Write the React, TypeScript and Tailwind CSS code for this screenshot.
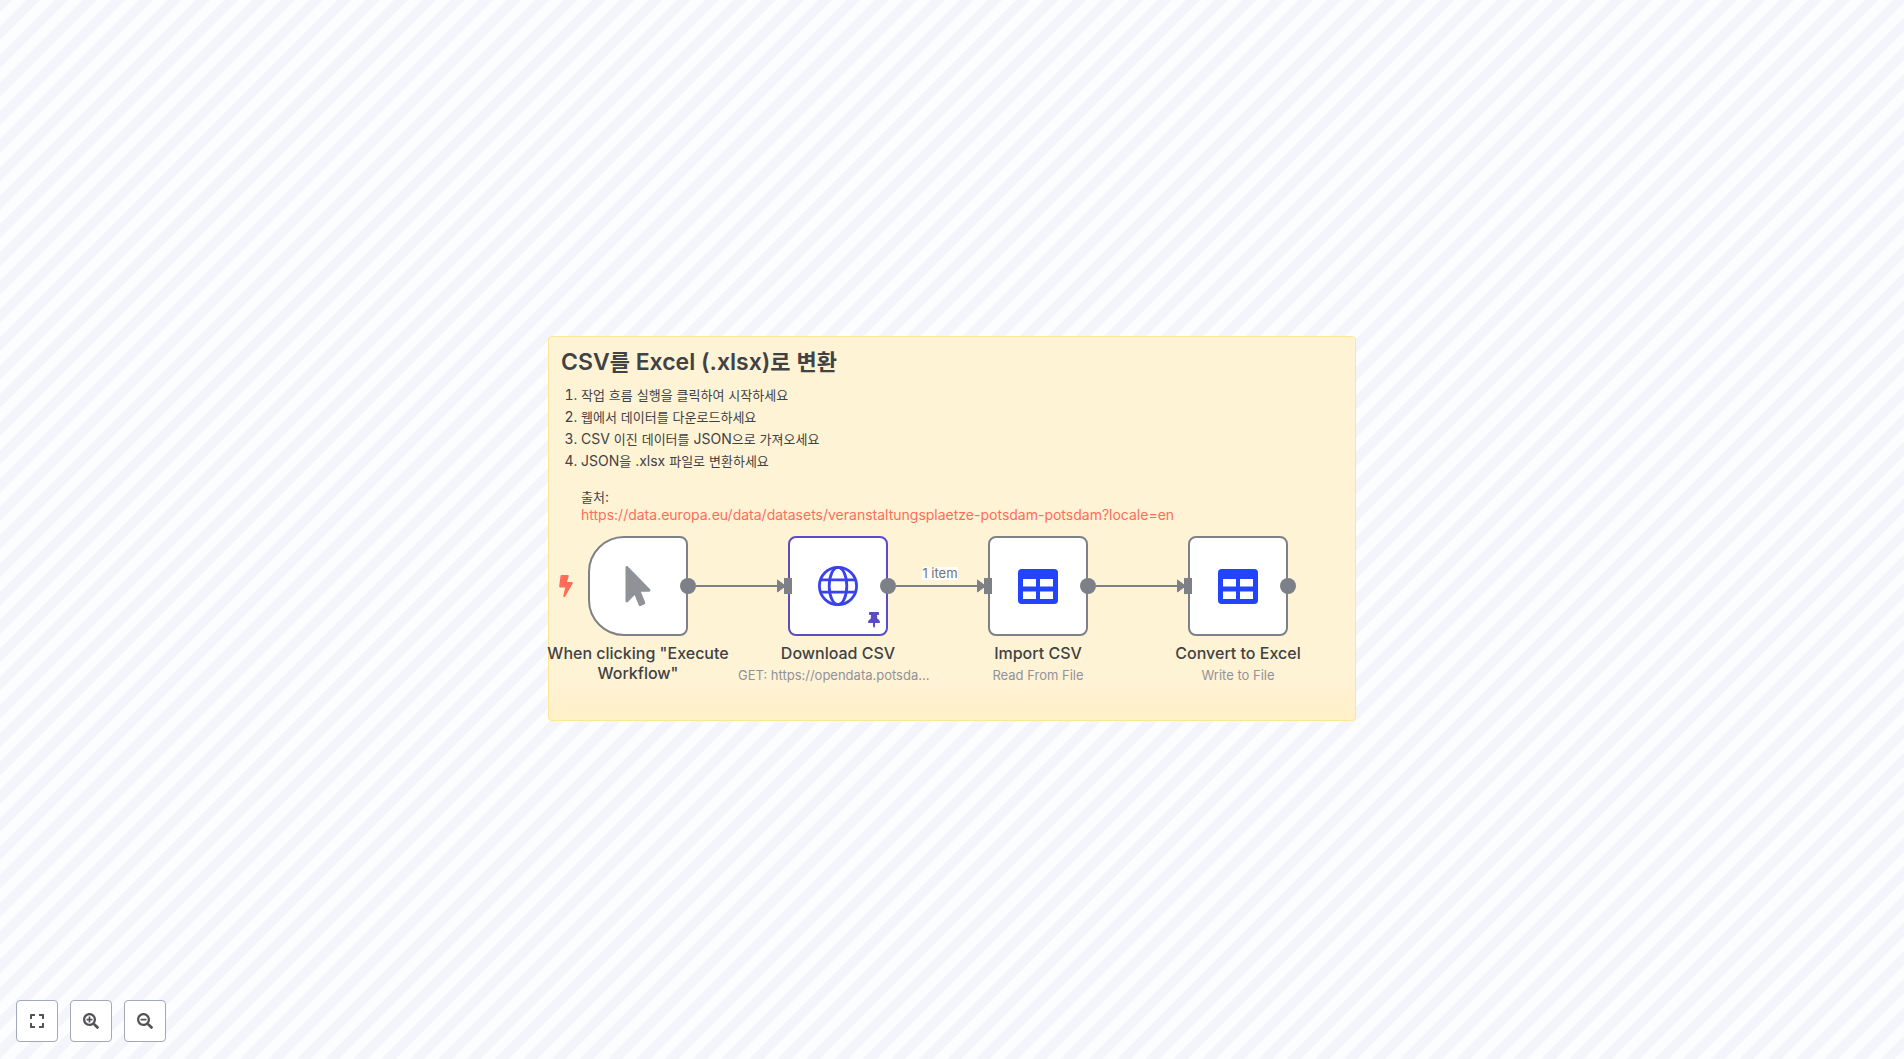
import React from "react";
import { FaBolt, FaExpand, FaMousePointer, FaSearchMinus, FaSearchPlus, FaThumbtack } from "react-icons/fa";

const steps = [
  "작업 흐름 실행을 클릭하여 시작하세요",
  "웹에서 데이터를 다운로드하세요",
  "CSV 이진 데이터를 JSON으로 가져오세요",
];

const sourceUrl = "https://data.europa.eu/data/datasets/veranstaltungsplaetze-potsdam-potsdam?locale=en";

/* Sets Hangul runs one step smaller than the Latin text beside them. */
function Mixed({ text, hangul }: { text: string; hangul: string }) {
  return (
    <>
      {text.split(/([가-힣]+)/).map((part, i) =>
        i % 2 ? (
          <span key={i} className={hangul}>
            {part}
          </span>
        ) : (
          part
        ),
      )}
    </>
  );
}

function GlobeIcon() {
  return (
    <svg viewBox="0 0 40 40" className="size-10" fill="none" stroke="#3a42e9" strokeWidth="2.8" aria-hidden="true">
      <circle cx="20" cy="20" r="18.6" />
      <ellipse cx="20" cy="20" rx="8.8" ry="18.6" />
      <path d="M2.5 13.8h35M2.5 26.2h35" />
    </svg>
  );
}

function TableIcon() {
  return (
    <svg viewBox="0 0 40 35" className="h-[35px] w-10" aria-hidden="true">
      <path
        fill="#2244ff"
        fillRule="evenodd"
        d="M3.75 0h32.5A3.75 3.75 0 0 1 40 3.75v27.5A3.75 3.75 0 0 1 36.250 35H3.75A3.75 3.75 0 0 1 0 31.250V3.750A3.75 3.75 0 0 1 3.75 0ZM5 10v7.500h13V10ZM22 10v7.500h13V10ZM5 22.500V30h13v-7.500ZM22 22.500V30h13v-7.500Z"
      />
    </svg>
  );
}

type NodeProps = {
  place: string;
  title: string;
  subtitle?: string;
  longSubtitle?: boolean;
  trigger?: boolean;
  pinned?: boolean;
  children: React.ReactNode;
};

function Node({ place, title, subtitle, longSubtitle, trigger, pinned, children }: NodeProps) {
  return (
    <div className={`absolute top-[199px] flex w-[200px] flex-col items-center ${place}`}>
      <div
        className={`relative flex size-[100px] items-center justify-center border-2 bg-white ${
          trigger ? "rounded-l-[36px] rounded-r-lg" : "rounded-lg"
        } ${pinned ? "border-[#5b4bc4]" : "border-[#7d8187]"}`}
      >
        {children}
        {trigger ? (
          <FaBolt className="absolute right-full mr-[11px] h-[22px] w-[26px] text-[#ff6d5a]" />
        ) : (
          <span className="absolute -left-1.5 h-4 w-2 bg-[#7d8187]" />
        )}
        <span className="absolute -right-2.5 size-4 rounded-full bg-[#7d8187]" />
        {pinned && <FaThumbtack className="absolute right-1.5 bottom-1.5 h-4 w-3 text-[#5b4bc4]" />}
      </div>
      <div className="mt-[7px] text-center text-base leading-5 font-medium text-[#414244]">{title}</div>
      {subtitle && (
        <div className={`mt-0.5 text-[13px] leading-5 whitespace-nowrap text-[#909298] ${longSubtitle ? "self-start" : ""}`}>
          {subtitle}
        </div>
      )}
    </div>
  );
}

function Edge({ place, label }: { place: string; label?: string }) {
  return (
    <div className={`absolute top-[241px] flex w-[94px] justify-center ${place}`}>
      <svg viewBox="0 0 94 16" className="h-4 w-full" aria-hidden="true">
        <path d="M0 8h86" stroke="#7d8187" strokeWidth="2" />
        <path d="M81.500 2l8 6-8 6z" fill="#7d8187" stroke="#7d8187" strokeLinejoin="round" />
      </svg>
      {label && (
        <span className="absolute bottom-full mr-1.5 -mb-0.5 bg-white/80 text-[13px] leading-[13px] whitespace-nowrap text-[#71747a]">
          {label}
        </span>
      )}
    </div>
  );
}

function ControlButton({ label, children }: { label: string; children: React.ReactNode }) {
  return (
    <button
      type="button"
      aria-label={label}
      className="flex size-[42px] items-center justify-center rounded border border-[#a3a8b8] bg-white text-base text-[#525356]"
    >
      {children}
    </button>
  );
}

export default function App() {
  return (
    <main className="relative flex min-h-screen items-center justify-center bg-[repeating-linear-gradient(135deg,#f4f5fb_0px,#f4f5fb_8px,#fcfdff_9px,#fcfdff_18px,#f4f5fb_19px,#f4f5fb_20px)] pb-0.5 font-['Inter','Noto_Sans_CJK_KR',sans-serif]">
      <section className="relative h-[385px] w-[808px] rounded border border-[#fde594] bg-[linear-gradient(to_bottom,#fff3d6_340px,#fff0c8)] px-3 pt-[9px] text-[#414244]">
        <h1 className="text-[23px] leading-8 font-semibold">
          <Mixed text="CSV를 Excel (.xlsx)로 변환" hangul="text-[22px]" />
        </h1>
        <ol className="mt-2 list-decimal pl-5 text-sm leading-[18px]">
          {steps.map((step) => (
            <li key={step} className="mb-1">
              <Mixed text={step} hangul="text-[13px]" />
            </li>
          ))}
          <li>
            <Mixed text="JSON을 .xlsx 파일로 변환하세요" hangul="text-[13px]" />
            <p className="mt-[18px]">
              <Mixed text="출처:" hangul="text-[13px]" />
              <br />
              <a href={sourceUrl} className="text-[#ff6d5a]">
                {sourceUrl}
              </a>
            </p>
          </li>
        </ol>

        <Edge place="left-[147px]" />
        <Edge place="left-[347px]" label="1 item" />
        <Edge place="left-[547px]" />

        <Node place="-left-[11px]" title={'When clicking "Execute Workflow"'} trigger>
          <FaMousePointer className="size-10 text-[#909298]" />
        </Node>
        <Node
          place="left-[189px]"
          title="Download CSV"
          subtitle="GET: https://opendata.potsda..."
          longSubtitle
          pinned
        >
          <GlobeIcon />
        </Node>
        <Node place="left-[389px]" title="Import CSV" subtitle="Read From File">
          <TableIcon />
        </Node>
        <Node place="left-[589px]" title="Convert to Excel" subtitle="Write to File">
          <TableIcon />
        </Node>
      </section>

      <div className="absolute bottom-[17px] left-4 flex gap-3">
        <ControlButton label="Zoom to fit">
          <FaExpand />
        </ControlButton>
        <ControlButton label="Zoom in">
          <FaSearchPlus />
        </ControlButton>
        <ControlButton label="Zoom out">
          <FaSearchMinus />
        </ControlButton>
      </div>
    </main>
  );
}
